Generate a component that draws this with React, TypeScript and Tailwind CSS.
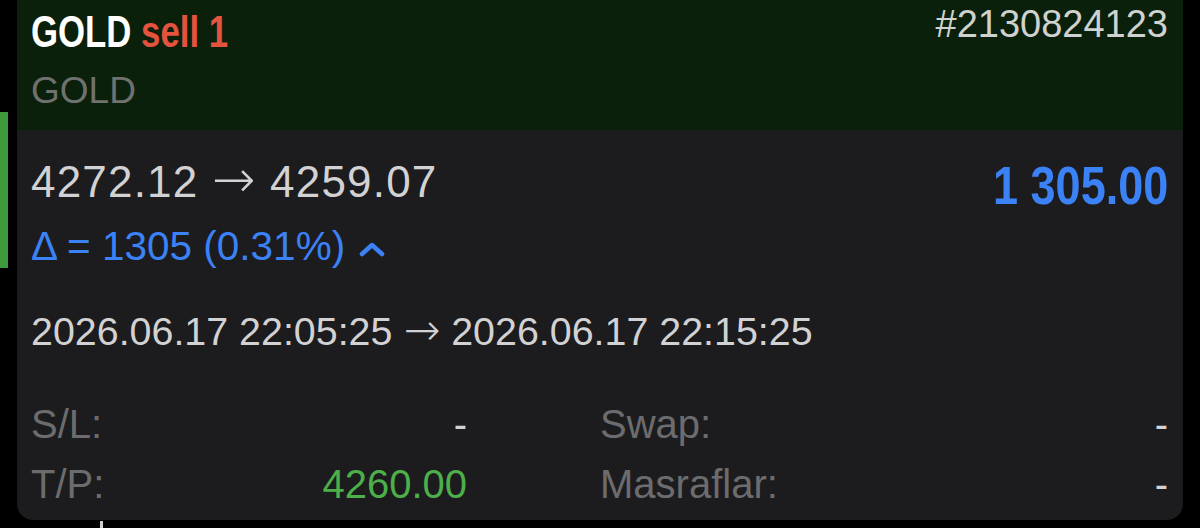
import React from "react";

const sans = { fontFamily: '"Liberation Sans", Arial, sans-serif' } as React.CSSProperties;
const arrowFont = { fontFamily: '"DejaVu Sans", sans-serif' } as React.CSSProperties;

export default function App() {
  return (
    <div className="w-[1200px] h-[528px] bg-black flex overflow-hidden" style={sans}>
      <div className="w-[17px] shrink-0">
        <div className="mt-[112px] w-[8px] h-[156px] bg-[#3f9a3c]" />
      </div>
      <div className="w-[1166px] shrink-0 flex flex-col">
        <div className="h-[520px] rounded-b-[16px] bg-[#1c1c1e] overflow-hidden flex flex-col">
          <div className="h-[130px] bg-[#0a200a] px-[14px] pr-[15px] flex justify-between items-start">
            <div className="flex flex-col">
              <div className="mt-[10px] text-[44px] leading-none font-bold whitespace-nowrap inline-block origin-left scale-x-[0.79]">
                <span className="text-white">GOLD</span> <span className="text-[#e5533e]">sell 1</span>
              </div>
              <div className="mt-[18px] text-[37px] leading-none text-[#6f716f]">GOLD</div>
            </div>
            <div className="mt-[5px] text-[38px] leading-none text-[#cfd2cf]">#2130824123</div>
          </div>
          <div className="px-[14px] pr-[15px] flex flex-col">
            <div className="pt-[29px] flex justify-between items-start">
              <div className="mt-[1px] h-[44px] text-[44px] leading-none text-[#d2d2d4] tracking-[1.2px] whitespace-nowrap">
                4272.12 <span className="text-[52px] leading-[0] font-light" style={arrowFont}>→</span> 4259.07
              </div>
              <div className="text-[53px] leading-none font-bold text-[#3b82f6] whitespace-nowrap origin-right scale-x-[0.85]">
                1 305.00
              </div>
            </div>
            <div className="mt-[14px] flex items-center text-[40.5px] leading-none text-[#3b82f6]">
              <span>Δ = 1305 (0.31%)</span>
              <svg className="ml-[14px] mt-[6px]" width="26" height="16" viewBox="0 0 26 16">
                <path d="M3 13 L13 4 L23 13" fill="none" stroke="#3b82f6" strokeWidth="4.5" strokeLinecap="round" strokeLinejoin="round" />
              </svg>
            </div>
            <div className="mt-[45px] h-[40px] text-[39.4px] leading-none text-[#d2d2d4] whitespace-nowrap">
              2026.06.17 22:05:25 <span className="text-[44px] leading-[0] font-light" style={arrowFont}>→</span> 2026.06.17 22:15:25
            </div>
            <div className="mt-[52px] grid grid-cols-[436px_1fr] gap-x-[133px] gap-y-[20px] text-[40px] leading-none">
              <div className="flex justify-between">
                <span className="text-[#6c6c6e]">S/L:</span>
                <span className="text-[#d2d2d4]">-</span>
              </div>
              <div className="flex justify-between">
                <span className="text-[#6c6c6e]">Swap:</span>
                <span className="text-[#d2d2d4]">-</span>
              </div>
              <div className="flex justify-between">
                <span className="text-[#6c6c6e]">T/P:</span>
                <span className="text-[#4caf4a]">4260.00</span>
              </div>
              <div className="flex justify-between">
                <span className="text-[#6c6c6e]">Masraflar:</span>
                <span className="text-[#d2d2d4]">-</span>
              </div>
            </div>
          </div>
        </div>
        <div className="ml-[83px] mt-[1px] w-[3px] h-[7px] bg-[#cfcfcf]" />
      </div>
    </div>
  );
}
